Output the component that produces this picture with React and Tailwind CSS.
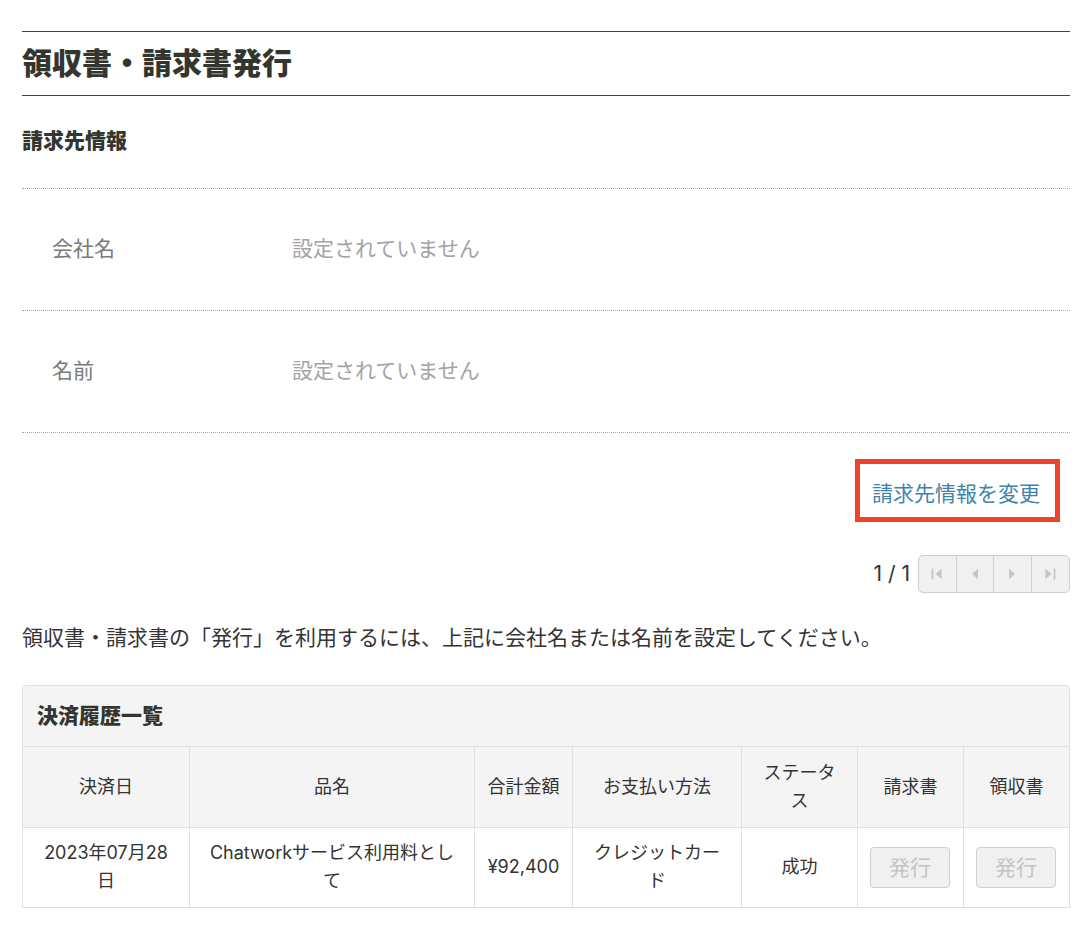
const Th = ({ children, w }) => (
  <th className={`${w} border border-[#e0e0e0] bg-[#f4f4f4] px-[15px] pb-[1px] font-normal text-[18px] leading-[28px] text-[#333]`}>{children}</th>
);
const Td = ({ children }) => (
  <td className="border border-[#e0e0e0] px-[15px] pb-[1px] text-center text-[18px] leading-[28px] text-[#333]">{children}</td>
);
const IssueCell = () => (
  <td className="border border-[#e0e0e0] pl-[12px] text-left">
    <div className="flex h-[41px] w-[80px] items-center justify-center rounded-[4px] border border-[#cfcfcf] bg-[#f0f0f0] text-[21px] text-[#c4c4c4]">発行</div>
  </td>
);
const Row = ({ label }) => (
  <div className="flex h-[122px] items-center border-b border-dotted border-[#a8a8a8] pb-[2px] pl-[30px] text-[21px]">
    <div className="w-[240px] text-[#7a7a7a]">{label}</div>
    <div className="text-[#a3a3a3]">設定されていません</div>
  </div>
);
const PageBtn = ({ children, last }) => (
  <div className={`flex h-full w-[38px] items-center justify-center ${last ? "" : "border-r border-[#cfcfcf]"}`}>
    <svg width="14" height="14" viewBox="0 0 14 14" fill="#c6c6c6">{children}</svg>
  </div>
);
export default function App() {
  return (
    <div className="min-h-[946px] bg-white pl-[22px] pt-[31px] text-[#333] [font-family:Inter,'Noto_Sans_CJK_JP',sans-serif]">
      <div className="w-[1048px]">
        <h1 className="flex h-[65px] items-center border-y border-[#444] text-[30px] font-black text-[#33352f]">領収書・請求書発行</h1>
        <h2 className="flex h-[93px] items-center border-b border-dotted border-[#a8a8a8] pb-[2px] text-[21px] font-black text-[#33352f]">請求先情報</h2>
        <Row label="会社名" />
        <Row label="名前" />
        <div className="flex justify-end pr-[10px] pt-[26px]">
          <div className="flex h-[63px] w-[205px] items-center justify-center border-[5px] border-[#ee4427] pt-[6px] pr-[3px] text-[21px] text-[#3f83ad]">請求先情報を変更</div>
        </div>
        <div className="mt-[33px] flex items-center justify-end">
          <span className="mr-[8px] text-[21px] text-[#333]">1 / 1</span>
          <div className="flex h-[38px] w-[152px] rounded-[5px] border border-[#cfcfcf] bg-[#f0f0f0]">
            <PageBtn><rect x="1.6" y="1.6" width="1.7" height="10.8" /><path d="M11.6 1.8v10.4L5.6 7z" /></PageBtn>
            <PageBtn><path d="M10 1.8v10.4L4 7z" /></PageBtn>
            <PageBtn><path d="M4 1.8v10.4L10 7z" /></PageBtn>
            <PageBtn last><path d="M2.4 1.8v10.4L8.4 7z" /><rect x="10.7" y="1.6" width="1.7" height="10.8" /></PageBtn>
          </div>
        </div>
        <p className="mt-[27px] text-[21px] leading-[36px] text-[#333]">領収書・請求書の「発行」を利用するには、上記に会社名または名前を設定してください。</p>
        <div className="mt-[29px]">
          <div className="flex h-[61px] items-center rounded-t-[5px] border border-b-0 border-[#e0e0e0] bg-[#f4f4f4] pb-[1px] pl-[14px] text-[21px] font-black text-[#33352f]">決済履歴一覧</div>
          <table className="w-[1047px] table-fixed border-collapse">
            <thead>
              <tr className="h-[81px]">
                <Th w="w-[167px]">決済日</Th>
                <Th w="w-[285px]">品名</Th>
                <Th w="w-[98px]"><span className="-mx-[15px] block">合計金額</span></Th>
                <Th w="w-[169px]">お支払い方法</Th>
                <Th w="w-[116px]">ステータス</Th>
                <Th w="w-[106px]">請求書</Th>
                <Th w="w-[106px]">領収書</Th>
              </tr>
            </thead>
            <tbody>
              <tr className="h-[80px]">
                <Td>2023年07月28日</Td>
                <Td>Chatworkサービス利用料として</Td>
                <Td><span className="-mx-[15px] block">¥92,400</span></Td>
                <Td>クレジットカード</Td>
                <Td>成功</Td>
                <IssueCell />
                <IssueCell />
              </tr>
            </tbody>
          </table>
        </div>
      </div>
    </div>
  );
}
